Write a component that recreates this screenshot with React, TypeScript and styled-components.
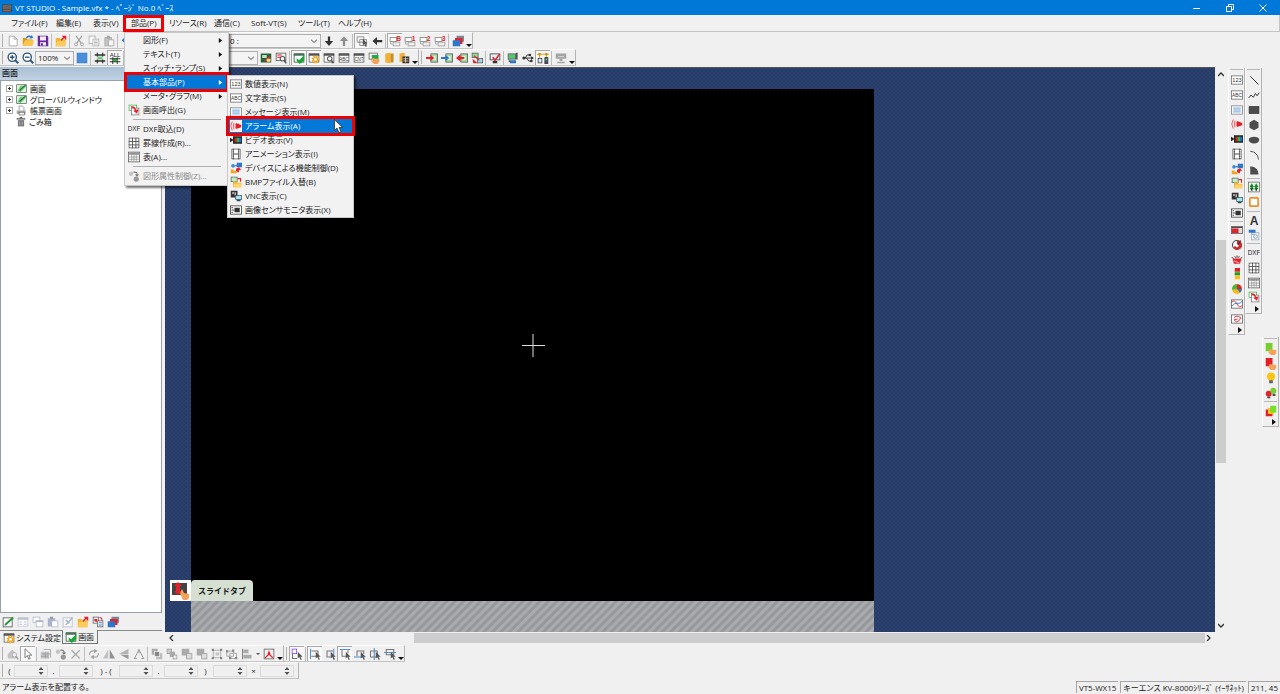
import React from 'react';
import styled, { createGlobalStyle, css } from 'styled-components';

const GlobalStyle = createGlobalStyle`
  * { box-sizing: border-box; }
  body { margin: 0; background: #f0f0f0; }
  body, button, input, select {
    font-family: "Open Sans", "Noto Sans CJK JP", sans-serif;
    font-size: 8px;
    line-height: 12px;
    font-feature-settings: "palt";
    color: #1a1a1a;
  }
`;

/* ---------- icons ---------- */

const D = '#555';
const G = '#a4a4a4';
const RED = '#e2222b';
const BLUE = '#2f75c8';
const GREEN = '#37b34a';

const R = (x: number, y: number, w: number, h: number, fill: string, stroke?: string) => (
  <rect x={x} y={y} width={w} height={h} fill={fill} stroke={stroke} />
);
const L = (d: string, stroke: string, width = 1.4) => (
  <path d={d} fill="none" stroke={stroke} strokeWidth={width} />
);
const F = (d: string, fill: string) => <path d={d} fill={fill} />;
const T = (text: string, size: number, fill: string, y: number, x = 8) => (
  <text x={x} y={y} fontSize={size} fill={fill} textAnchor="middle" fontFamily="Liberation Sans, sans-serif">
    {text}
  </text>
);
const windowFrame = <>{R(1.5, 2.5, 13, 11, '#fff', D)}{R(1, 2, 14, 3, D)}</>;
const pointer = F('M9 5v9l2-2 2 4 1.500-1-2-3.500h3z', D);
const hand = F('M5 9l2-1 3 1 5 0v4l-2 3H8l-4-4 1-1 2 1z', '#f4a259');
const deviceBox = <>{R(6.500, 2.500, 9, 11, '#9fd89f', D)}{R(9, 5, 4, 6, '#d8f0d0')}</>;

const icons: Record<string, React.ReactNode> = {
  newFile: <path d="M3 1.500h6.500l4 4v9H3zM9.500 1.500v4h4" fill="#fff" stroke="#999" />,
  open: <>{F('M1 4h5l1 2h7v8H1z', '#d99a1c')}{F('M4 7h12l-3 7H1z', '#fcc64a')}{L('M6 4q3-4 6-1', BLUE, 2)}{F('M10 5l5-1-2-4z', BLUE)}</>,
  save: <>{R(2, 2, 12, 12, '#fff', '#6a2a9c')}{F('M1 1h13l1 2v12H1zM4 2v5h8V2zM4 10v4h8v-4z', '#6a2a9c')}{R(4, 2, 8, 5, '#f4eef8')}{R(4, 10, 8, 4, '#f4eef8')}{R(5, 11, 3, 3, '#6a2a9c')}</>,
  exportFile: <>{F('M1 4h5l1 2h7v9H1z', '#f5b32e')}{F('M3 8h12l-2 7H1z', '#fccd5e')}{L('M8 7l4-4', RED, 2.200)}{F('M9 1h6v6z', RED)}</>,
  cut: <>{L('M4 1l7 10M12 1L5 11', '#999', 1.600)}<circle cx="4" cy="12.500" r="2" fill="none" stroke="#999" /><circle cx="12" cy="12.500" r="2" fill="none" stroke="#999" /></>,
  copy: <>{R(1.500, 1.500, 8, 10, '#fff', G)}{R(6.500, 5.500, 8, 9, '#fff', G)}{L('M8 8h5M8 10h5M8 12h5', G, 1)}</>,
  paste: <>{R(2.500, 3.500, 9, 11, '#c4c4c4', G)}{R(5, 1, 4, 4, G)}{R(7.500, 6.500, 7, 8, '#f6f6f6', G)}</>,
  undo: F('M1 7l5-5v3q8 0 8 8-2-4-8-4v3z', BLUE),
  down: F('M6.500 2h3v6h4L8 14.500 2.500 8h4z', '#333'),
  up: F('M6.500 14.500h3V8h4L8 2 2.500 8h4z', '#8c8c8c'),
  left: F('M15 6.500v3H8v4L2 8l6-5.500v4z', '#333'),
  select: <>{R(1.500, 2.500, 9, 7, 'none', '#777')}{L('M5 6h9v8H5z', '#777', 1)}{pointer}</>,
  layers: <>{R(6, 1, 10, 8, '#7c8796')}{R(4, 4, 10, 8, RED)}{R(1, 7, 10, 8, BLUE)}</>,
  zoomIn: <><circle cx="7" cy="7" r="5.500" fill="#fff" stroke="#2c5574" strokeWidth="1.800" />{L('M11 11l4 4', '#2c5574', 2.400)}{L('M4 7h6M7 4v6', '#2c5574', 1.800)}</>,
  zoomOut: <><circle cx="7" cy="7" r="5.500" fill="#fff" stroke="#2c5574" strokeWidth="1.800" />{L('M11 11l4 4', '#2c5574', 2.400)}{L('M4 7h6', '#2c5574', 1.800)}</>,
  blueSquare: R(1.500, 1.500, 13, 13, '#4a90d9', '#2f75c8'),
  fit: <>{R(4, 5, 8, 6, '#bfe3c4')}{L('M1 4h14M1 12h14', '#333', 2)}{L('M4.500 1v5M11.500 1v5M4.500 10v5M11.500 10v5', '#333', 1.600)}{L('M5 8h6', GREEN, 1.600)}</>,
  fitAll: <>{T('ALL', 8, '#222', 6)}{R(4, 9, 8, 4, GREEN)}{L('M1 9h14M1 13h14', '#333', 1.600)}{L('M5 7v3M11 7v3M5 12v4M11 12v4', '#333', 1.300)}</>,
  swapScreens: <>{R(1, 2, 14, 12, '#28623b')}{R(3, 4, 6, 4, '#bfe6b8')}{F('M5 12l8-7v7z', RED)}{R(9, 9, 5, 4, '#ffe28a')}</>,
  searchScreen: <>{R(1.500, 1.500, 13, 10, '#eee', D)}{L('M3 4h6M3 7h5', RED)}<circle cx="10" cy="9" r="3" fill="#fff" stroke={D} strokeWidth="1.400" />{L('M12 11l3 4', D, 2)}</>,
  screenCheck: <>{R(1.500, 2.500, 13, 11, '#fff', '#224b2c')}{R(1, 2, 14, 3, '#49715a')}{F('M5 8l3 3 7-7v7l-6 5-4-4z', '#18a53a')}</>,
  screenGear: <>{windowFrame}<circle cx="10" cy="10" r="4" fill="#fff" stroke="#f2a51d" strokeWidth="2.600" strokeDasharray="1.900 1.240" /><circle cx="10" cy="10" r="2.800" fill="#fff" stroke="#f2a51d" strokeWidth="1.800" /></>,
  screenSearch: <>{windowFrame}<circle cx="9" cy="9" r="3" fill="#fff" stroke={D} strokeWidth="1.400" />{L('M11 11l3 4', D, 2)}</>,
  abcWin: <>{windowFrame}{T('ABC', 6, '#333', 12)}</>,
  cntWin: <>{windowFrame}{T('CNT', 6, '#333', 12)}</>,
  screenHand: <>{R(1.500, 1.500, 11, 8, '#fff', D)}{R(5, 4, 9, 6, '#21a848')}{hand}</>,
  book: <>{F('M3 2l7-1v14l-7-1z', '#f2b134')}{R(10, 2, 4, 12, '#c98b1a')}</>,
  bookGrid: <>{F('M2 2l7-1v13l-7-1z', '#f2b134')}{R(6, 6, 9, 9, '#3b2a1a')}{L('M7 9h7M7 12h7M10 7v7', '#eee', 1)}</>,
  sendRed: <>{deviceBox}{L('M0 8h7', RED, 2.600)}{F('M6 4l5 4-5 4z', RED)}</>,
  sendBlue: <>{deviceBox}{L('M0 8h7', BLUE, 2.600)}{F('M6 4l5 4-5 4z', BLUE)}</>,
  receiveRed: <>{deviceBox}{L('M4 8h7', RED, 2.600)}{F('M6 3L0 8l6 5z', RED)}</>,
  compare: <>{R(1.500, 1.500, 8, 6, '#8fd89a', D)}{R(8.500, 8.500, 7, 6, '#9adcf0', D)}{F('M2 9l7 6H3z', RED)}{L('M4 5l7 6', RED, 1.600)}</>,
  monitorCheck: <>{R(1.500, 2.500, 13, 8, '#dfeef5', '#333')}{R(5, 12, 6, 3, '#333')}{L('M5 7l3 4 6-8', RED, 2)}</>,
  simulate: <>{R(1.500, 2.500, 10, 7, '#52c873', D)}{L('M13 1v9', D, 2.400)}{L('M3 10v3h9', D)}{R(4, 11, 8, 4, BLUE)}</>,
  usb: <>{L('M1 8h13M4 8l3-4h3M6 8l3 4h3', '#333', 1.300)}<circle cx="2.500" cy="8" r="2" fill="#333" />{F('M12 5.500l4 2.500-4 2.500z', '#333')}{R(9, 2.500, 3, 3, '#333')}{R(11, 10.500, 3, 3, '#333')}</>,
  network: <>{L('M0 3h16', '#e8b52a', 1.600)}{R(2, 1.500, 3, 3, '#c78d12')}{R(11, 1.500, 3, 3, '#c78d12')}{L('M3.500 4v4M12.500 4v4', '#c78d12', 1)}{R(1.500, 8.500, 5, 6, '#d8f0ff', '#333')}{R(10.500, 7.500, 4, 8, '#456', '#333')}{R(11.500, 9, 2, 2, '#67e07d')}</>,
  device: <>{R(1, 2, 14, 7, G)}{L('M4 6h8', '#ddd', 1)}{R(6, 9, 4, 3, G)}{R(3, 13, 10, 2, G)}</>,
  screenTree: <>{R(1, 2.500, 14, 11.500, '#e5f5e4', '#42604a')}{F('M2 12l4-8 8 0v2l-7 7z', '#7bcb84')}{L('M5 11L14 3', '#2a7d3a', 2)}</>,
  report: <>{L('M4.500 8V1.500h5l2 2V8', '#777', 1)}{F('M1 8h13v5H1z', '#a9a9a9')}{R(4.500, 10.500, 8, 4, '#fff', D)}</>,
  trash: <>{R(3, 5, 10, 10, '#777')}{R(1, 2, 14, 2, '#555')}{R(6, 0, 4, 2, '#555')}{L('M6 7v6M10 7v6', '#ccc', 1)}</>,
  call: <>{R(1.500, 1.500, 10, 7, '#fff', GREEN)}{R(4.500, 5.500, 10, 9, '#fff', '#777')}{L('M4 4q5-1 6 5', RED, 2)}{F('M14 7l-2 6-5-4z', RED)}</>,
  dxf: T('DXF', 8.500, '#222', 11),
  grid: <>{R(1.500, 1.500, 13, 13, '#fff', D)}{L('M6 1v14M10.500 1v14M1 6h14M1 10.500h14', D, 1.200)}</>,
  table: <>{R(.500, 1.500, 15, 13, '#fff', D)}{R(1, 2, 14, 3, '#999')}{L('M5 2v12M8 2v12M11 2v12M1 8h14M1 11h14', '#888', .900)}</>,
  attr: <><circle cx="4" cy="5" r="3" fill="#c5c5c5" /><circle cx="11" cy="12" r="3.500" fill="#999" />{L('M7 3q6-1 5 4', '#777', 1.400)}{F('M9 6h6l-3 3z', '#777')}</>,
  numeric: <>{R(.500, 2.500, 15, 11, '#fff', '#666')}{T('123', 7.500, '#333', 11)}</>,
  text: <>{R(.500, 2.500, 15, 11, '#fff', '#666')}{T('ABC', 6.500, '#333', 10.500)}</>,
  message: <>{R(.800, 2.500, 14.500, 11, '#fff', '#777')}{L('M3 5.500h10M3 8h10M3 10.500h10', '#5b9bdf', 1.200)}</>,
  alarm: <>{F('M8 4v8l7-2.500V6.500z', RED)}{L('M5.500 3.500q-2.500 4.500 0 9M3 2q-4 6 0 12', '#ef5a5f', 1.300)}{L('M7.500 5q-1.500 3 0 6', '#ef5a5f', 1.200)}</>,
  video: <>{R(4, 3, 12, 10, '#222')}{F('M0 5l5 3-5 3z', '#222')}{R(6, 5, 3, 6, '#e02020')}{R(9, 5, 3, 6, '#21c043')}{R(12, 5, 3, 6, '#2766d8')}</>,
  film: <>{R(2.500, 1.500, 11, 13, '#fff', D)}{L('M4.500 1v14M11.500 1v14', D, 1.600)}{L('M5 8h6', D, 1.400)}{L('M4 3v1M4 6v1M4 9v1M4 12v1M12 3v1M12 6v1M12 9v1M12 12v1', '#fff', 1)}</>,
  deviceControl: <>{R(9, 1, 7, 6, BLUE)}<circle cx="4" cy="5" r="2.500" fill="#3d8dd8" />{F('M1 10h4v2h4v3H1z', '#f2a51d')}{F('M8 9l4-2 3 3-3 1v3l-4-2z', RED)}{L('M6 5h4', BLUE, 1.500)}</>,
  bmp: <>{R(1.500, 1.500, 8, 6, '#c7ecc7', '#49715a')}{L('M10 3.500h4v4', RED, 1.500)}{F('M4 7h5l1 2h5v6H4z', '#f0b43a')}{F('M6 10h10l-2 5H4z', '#fcd46c')}</>,
  vnc: <>{R(1, 1, 9, 9, '#333')}{R(3, 3, 2, 2, '#eee')}{R(6, 3, 2, 4, '#bbb')}{R(7.500, 7.500, 8, 5, '#a7e4f5', '#355')}{R(9, 13, 5, 2, '#345')}</>,
  sensor: <>{R(.800, 2.500, 14.500, 11, '#fff', '#333')}{R(6, 5, 7, 6, '#333')}{L('M2 8h4M2 5h2M2 11h2', '#333', 1.200)}</>,
  bar: <>{R(.500, 3.500, 15, 9, '#ddd', '#555')}{R(1, 6, 9, 6, RED)}{L('M1 4.500h14', '#444', 1.500)}</>,
  gauge: <><circle cx="8" cy="8" r="6" fill="#fff" stroke="#444" strokeWidth="1.500" />{F('M8 2a6 6 0 1 1-5 9l5-3z', RED)}{L('M8 9l5-7', '#333', 1.600)}<circle cx="8" cy="9" r="2" fill="#fff" /></>,
  meter: <>{F('M2 6h12l-2 7H4z', RED)}{L('M1 4l2 2M5 3l1 2M8 2v3M11 3l-1 2M15 4l-2 2', '#333', 1.300)}{L('M4 9l7 3', '#fff', 1)}</>,
  levels: <>{R(5, 0, 7, 5, RED)}{R(5, 5, 7, 5, '#40c038')}{R(5, 10, 7, 5, '#f4c21c')}{L('M5 8h7', '#333', 1)}</>,
  pie: <><circle cx="8" cy="8" r="6.500" fill="#f2bb1c" />{F('M8 8L1.500 9A6.500 6.500 0 0 1 8 1.500z', '#46b83b')}{F('M8 8V1.500A6.500 6.500 0 0 1 14.500 8z', RED)}{F('M8 8h6.500A6.500 6.500 0 0 1 12 13z', BLUE)}</>,
  trend: <>{R(.800, 2.500, 14.500, 11, '#fff', '#555')}{L('M1 5q4-3 7 3t7 2', RED, 1.200)}{L('M1 11q4-5 8-4t6-3', BLUE, 1.200)}</>,
  xy: <>{R(.800, 2.500, 14.500, 11, '#fff', '#555')}{L('M4 6l4-2 5 2-2 4-4 2-3-3 5-1', RED, 1.200)}</>,
  line: L('M3 3l11 11', '#333', 1.300),
  polyline: L('M1 12l3-4 3 3 3-5 2 3 3-4', '#333', 1.300),
  rect: R(1.500, 3.500, 13, 9, '#4c4c4c', '#333'),
  hexagon: F('M8 1l6 3.500v7L8 15l-6-3.500v-7z', '#4c4c4c'),
  ellipse: <ellipse cx="8" cy="8" rx="7" ry="4.500" fill="#4c4c4c" />,
  arc: L('M3 3q10 1 11 11', '#444', 1.200),
  sector: F('M3 3q11 1 11 11H3z', '#4c4c4c'),
  image: <>{R(.800, 1.500, 14.500, 13, '#eefaee', '#666')}{F('M5 3l3 5H2zM5 6l3 5H2zM11 3l3 5H8zM11 6l3 5H8z', '#198a2e')}{R(4, 10, 2, 3, '#333')}{R(10, 10, 2, 3, '#333')}</>,
  frame: <rect x="2.500" y="2.500" width="11" height="11" rx="1" fill="#fff" stroke="#e8902a" strokeWidth="2.200" />,
  letter: <text x="8" y="14" fontSize="16" fontWeight="bold" fill="#333" textAnchor="middle" fontFamily="Liberation Sans, sans-serif">A</text>,
  linkScreen: <>{R(4.500, 4.500, 10, 10, '#eef3f8', '#9ab')}{R(1, 1, 9, 4, BLUE)}<circle cx="10" cy="10" r="2.500" fill="none" stroke="#89a" />{L('M5 7h4', '#89a', 1.200)}</>,
  touchGreen: <>{R(1, 0, 9, 11, '#76d02c')}{hand}</>,
  touchRed: <>{R(1, 0, 9, 11, '#e21f26')}{hand}</>,
  bulb: <><circle cx="8" cy="6" r="5.500" fill="#fbc412" />{R(5.500, 11, 5, 4, '#666')}</>,
  lamps: <><circle cx="5" cy="9" r="4" fill={RED} /><circle cx="11" cy="5" r="4" fill="#76d02c" />{R(3, 13, 4, 2, '#444')}{R(10, 9, 4, 3, '#555')}</>,
  palette: <>{R(1, 6, 9, 9, '#e21f26')}{R(4, 4, 8, 8, '#fbc412')}{R(7, 1, 8, 9, '#76e02c')}</>,
  editScreen: <>{R(1.500, 2.500, 12, 12, '#fff', '#444')}{L('M4 12L15 2', '#209038', 2.400)}</>,
  gWindow: <>{R(1.500, 2.500, 13, 11, '#fff', '#b9c2d2')}{R(1, 2, 14, 3, '#b9c2d2')}{L('M3 8h4M9 8h4M3 11h4M9 11h4', '#b9c2d2', 1.200)}</>,
  gCopy: <>{R(1.500, 1.500, 9, 7, '#fff', '#a9b3c9')}{R(5.500, 6.500, 9, 8, '#fff', '#a9b3c9')}{R(5, 6, 10, 2, '#a9b3c9')}</>,
  gPaste: <>{R(1, 3, 10, 11, '#a9b3c9')}{R(4, 1, 4, 3, '#8f9ab3')}{R(6.500, 6.500, 8, 8, '#fff', '#a9b3c9')}</>,
  gEdit: <>{R(1.500, 2.500, 12, 12, '#fff', '#a9b3c9')}{L('M5 12l9-10M5 5l5 5', '#a9b3c9', 2)}</>,
  convert: <>{R(1.500, 1.500, 7, 8, '#fff', D)}{R(7.500, 6.500, 7, 8, '#fff', D)}{L('M9 9h4M9 12h4', BLUE)}{F('M3 4h4v4l-4-1z', RED)}{L('M10 2q4 0 3 4', RED)}</>,
  gHouse: <>{F('M1 8l6-6 6 6v6H1z', '#c3c3c3')}<circle cx="10" cy="9" r="3" fill="#f0f0f0" stroke={G} />{L('M12 11l3 4', G, 1.800)}</>,
  arrowCursor: <path d="M4 1v12l3-3 2 5 2-1-2-4.500h4z" fill="#fff" stroke="#555" />,
  gTouch: <>{R(1, 5, 10, 9, '#c4c4c4')}{L('M5 2h9v11M3 8h11M7 5v9M11 5v9M1 11h10', '#999', 1)}</>,
  gDelete: L('M2 3l11 11M13 3L2 14', '#aaa', 1.600),
  gRotate: <>{L('M2 9q0-6 7-5M14 7q0 6-7 5', G, 1.600)}{F('M8 1l5 3-5 3zM8 9l-5 3 5 3z', G)}</>,
  gFlipH: <>{F('M7 2v12H0z', '#c0c0c0')}{F('M9 2v12h7z', '#909090')}</>,
  gFlipV: <>{F('M14 1v7H1z', '#b5b5b5')}{F('M14 15V9H3z', '#999')}</>,
  gTriangle: L('M8 2L2 14M8 2l6 12M8 2v5M1 14h4M11 14h4', '#999', 1.300),
  gFront: <>{R(1, 1, 8, 8, '#aaa')}{R(7, 7, 8, 8, '#bbb')}{R(4.500, 4.500, 7, 7, '#888', '#eee')}</>,
  gFront2: <>{R(1.500, 1.500, 6, 6, '#ccc', '#999')}{R(5, 5, 7, 7, '#aaa')}{R(9.500, 9.500, 5, 5, '#eee', '#999')}</>,
  gBack: <>{R(1, 1, 10, 9, '#aaa')}{R(7.500, 7.500, 7, 7, '#ddd', '#999')}</>,
  gGroup: <>{L('M3 3h10v10H3z', '#999', 1)}{R(1, 1, 3, 3, '#888')}{R(12, 1, 3, 3, '#888')}{R(1, 12, 3, 3, '#888')}{R(12, 12, 3, 3, '#888')}{R(6, 6, 5, 4, '#c4c4c4')}</>,
  gUngroup: <>{L('M1 4h9v7H1zM5 7h9v7H5z', '#999', 1)}{R(0, 3, 3, 3, '#888')}{R(8, 2, 3, 3, '#888')}{R(12, 12, 3, 3, '#888')}{R(4, 12, 3, 3, '#888')}</>,
  gAlign: <>{L('M2 1v14', '#777', 1.200)}{R(3, 2, 7, 5, '#aaa')}{R(3, 9, 11, 5, '#aaa')}</>,
  anchor: <>{R(1.500, 1.500, 13, 13, '#eee', '#555')}{F('M8 3l2 5-2 2-2-2z', RED)}{L('M8 8l-5 5M8 8l5 5', RED, 1.600)}</>,
  snapPurple: <>{R(1.500, 1.500, 6, 6, '#fff', '#7a3cf0')}{L('M2 8v6h6', '#777')}{pointer}</>,
  snapLeft: <>{L('M2 1v14', '#4d93dd')}{L('M3 4h9v7H3', '#777')}{pointer}</>,
  snapRight: <>{L('M13 1v14', '#4d93dd')}{L('M12 4H4v8h5', '#777')}{pointer}</>,
  snapTop: <>{L('M1 2h14', '#4d93dd')}{L('M4 3v8h6M12 3v4', '#777')}{pointer}</>,
  snapBottom: <>{L('M0 12h15', '#4d93dd')}{L('M4 11V4h9v4', '#777')}{pointer}</>,
  snapCenter: <>{L('M7 0v16', '#4d93dd')}{L('M2 4h9v8H2z', '#777')}{pointer}</>,
  snapMiddle: <>{L('M0 6h16', '#4d93dd')}{L('M3 2h10v7H3z', '#777')}{pointer}</>,
};
['B', '1', '2', '3'].forEach((mark) => {
  icons['screen' + mark] = (
    <>
      {R(1.5, 3.5, 9, 5, '#fff', '#777')}
      {R(5.5, 9.5, 9, 5, '#eee', '#999')}
      {L('M2 9v3h3', '#999', 1)}
      <text x="13" y="7.5" fontSize="9" fontWeight="bold" fill={RED} textAnchor="middle" fontFamily="Liberation Sans, sans-serif">{mark}</text>
    </>
  );
});

const Svg = styled.svg<{ $size: number }>`
  display: block;
  flex: none;
  width: ${(p) => p.$size}px;
  height: ${(p) => p.$size}px;
`;
const Icon = ({ name, size = 12 }: { name: string; size?: number }) => (
  <Svg $size={size} viewBox="0 0 16 16" aria-hidden="true">{icons[name]}</Svg>
);

/* ---------- shared parts ---------- */

const bare = css`
  border: 0;
  padding: 0;
  background: none;
`;

const Shell = styled.div`
  display: flex;
  flex-direction: column;
  min-height: 100vh;
  overflow: hidden;
`;

const TitleBar = styled.header`
  display: flex;
  align-items: center;
  height: 15px;
  padding: 0 2px;
  gap: 3px;
  background: #0078d7;
  color: #fff;
`;
const Title = styled.h1`
  flex: 1;
  margin: 0;
  font-size: 8px;
  font-weight: 400;
  line-height: 12px;
`;
const CaptionButton = styled.button`
  ${bare}
  display: grid;
  place-items: center;
  width: 30px;
  height: 15px;
`;

const MenuBar = styled.nav`
  display: flex;
  height: 17px;
  padding-left: 6px;
  border: 1px solid #c4c4c4;
  border-top: 0;
  border-left: 0;
  background: #f1f1f1;
`;
const MenuSlot = styled.div<{ $width: number; $marked?: boolean }>`
  position: relative;
  width: ${(p) => p.$width}px;
  ${(p) => p.$marked && css`
    &::after {
      content: '';
      position: absolute;
      inset: 0 0 -1px -3px;
      border: 3px solid #f00000;
      pointer-events: none;
    }
  `}
`;
const MenuButton = styled.button`
  ${bare}
  height: 16px;
  padding-left: 5px;
  white-space: nowrap;
`;

const menuPanel = css`
  position: absolute;
  z-index: 5;
  margin: 0;
  list-style: none;
  background: #f2f2f2;
  border: 1px solid #c8c8c8;
  box-shadow: 2px 2px 2px rgba(0, 0, 0, 0.55);
`;
const DropMenu = styled.ul`
  ${menuPanel}
  top: 17px;
  left: -2px;
  width: 105px;
  padding: 0 2px 2px 2px;
`;
const SubMenu = styled.ul`
  ${menuPanel}
  z-index: 6;
  top: 60px;
  left: 101px;
  width: 127px;
  padding: 1px 1px 0;
`;
const MenuLine = styled.li`
  position: relative;
`;
const MenuRow = styled.button<{ $active?: boolean; $off?: boolean }>`
  ${bare}
  position: relative;
  display: flex;
  align-items: center;
  gap: 3px;
  width: 100%;
  height: 14px;
  padding: 0 3px 0 1px;
  text-align: left;
  white-space: nowrap;
  color: ${(p) => (p.$off ? '#8a8a8a' : '#1a1a1a')};
  ${(p) => p.$active && css`
    z-index: 1;
    background: #0078d7;
    color: #fff;
    outline: 3px solid #f00000;
  `}
`;
const IconSlot = styled.span<{ $plain?: boolean }>`
  flex: none;
  width: 12px;
  height: 12px;
  background: ${(p) => (p.$plain ? '#f2f2f2' : 'none')};
`;
const RowText = styled.span`
  flex: 1;
`;
const MenuRule = styled.li`
  height: 5px;
  margin: 0 5px 0 6px;
  background: linear-gradient(#b0b0b0, #b0b0b0) 0 2px / 100% 1px no-repeat;
`;
const Cursor = styled.svg`
  position: absolute;
  right: 9px;
  top: 0;
  width: 10px;
  height: 14px;
`;

const BarRow = styled.div<{ $tall?: boolean }>`
  display: flex;
  height: ${(p) => (p.$tall ? 18 : 17)}px;
`;
const Bar = styled.div`
  display: flex;
  align-items: center;
  height: 17px;
  border-right: 1px solid #b4b4b4;
  border-bottom: 1px solid #c4c4c4;
  border-top: 1px solid #fafafa;
`;
const Grip = styled.span`
  width: 1px;
  height: 13px;
  margin: 0 2px 0 2px;
  background: #b0b0b0;
`;
const Sep = styled.span`
  width: 1px;
  height: 14px;
  margin: 0 1px;
  background: #bdbdbd;
`;
const Tool = styled.button<{ $pressed?: boolean }>`
  ${bare}
  display: grid;
  place-items: center;
  width: 15px;
  height: 15px;
  ${(p) => p.$pressed && css`
    background: #f8f8f8;
    box-shadow: inset 1px 1px 0 #a8a8a8;
  `}
`;
const MoreButton = styled.button<{ $middle?: boolean }>`
  ${bare}
  display: flex;
  align-items: ${(p) => (p.$middle ? 'center' : 'flex-end')};
  justify-content: center;
  width: 7px;
  height: 13px;
`;
const Triangle = styled.span`
  border: 3px solid transparent;
  border-top-color: #111;
  border-bottom: 0;
`;
const SmallTriangle = styled.span`
  border: 2px solid transparent;
  border-top-color: #555;
  border-bottom: 0;
`;
const Combo = styled.span<{ $width: number }>`
  display: flex;
  align-items: center;
  width: ${(p) => p.$width}px;
  height: 14px;
  padding-right: 3px;
  background: #f4f4f4;
  border: 1px solid #b0b0b0;
`;
const ComboSelect = styled.select`
  ${bare}
  appearance: none;
  flex: 1;
  min-width: 0;
  padding-left: 2px;
  outline: 0;
`;

const Chevron = () => (
  <Svg $size={6} viewBox="0 0 6 6" aria-hidden="true">{L('M0 1.500l3 3 3-3', '#444', 1)}</Svg>
);

/* A bar is a list of icon names; "|" is a divider, "*" marks a pressed tool,
   ">" is the overflow arrow and "v" a small drop-down arrow. */
const tools = (list: string) =>
  list.split(' ').map((token, i) => {
    if (token === '|') return <Sep key={i} />;
    if (token === '>') return <MoreButton key={i} aria-label="その他"><Triangle /></MoreButton>;
    if (token === 'v') return <MoreButton key={i} $middle aria-label="配置"><SmallTriangle /></MoreButton>;
    const pressed = token.startsWith('*');
    const name = pressed ? token.slice(1) : token;
    return (
      <Tool key={i} $pressed={pressed} aria-label={name}>
        <Icon name={name} />
      </Tool>
    );
  });

/* ---------- left panel ---------- */

const Main = styled.main`
  display: flex;
  flex: 1;
`;
const Side = styled.aside`
  display: flex;
  flex-direction: column;
  width: 162px;
  margin-right: 3px;
`;
const SideTitle = styled.h2`
  margin: 0;
  height: 13px;
  padding-left: 2px;
  font-size: 8px;
  font-weight: 500;
  line-height: 12px;
  background: linear-gradient(#a9bfd3, #c0d2e4);
`;
const Tree = styled.ul`
  flex: 1;
  margin: 0;
  padding: 2px 0 0 5px;
  list-style: none;
  background: #fff;
  border: 1px solid #98a0aa;
`;
const TreeRow = styled.li`
  display: flex;
  align-items: center;
  gap: 3px;
  height: 11px;
  color: #111;
`;
const Expander = styled.button`
  ${bare}
  display: grid;
  place-items: center;
  width: 7px;
  height: 7px;
`;
const ExpanderSpace = styled.span`
  width: 7px;
`;
const TreeText = styled.span<{ $selected?: boolean }>`
  background: ${(p) => (p.$selected ? '#efefef' : 'none')};
`;
const SideTools = styled.div`
  display: flex;
  align-items: center;
  height: 17px;
`;
const Tabs = styled.div`
  display: flex;
  height: 15px;
  border-top: 1px solid #8a8a8a;
`;
const Tab = styled.button<{ $active?: boolean }>`
  ${bare}
  display: flex;
  align-items: center;
  gap: 1px;
  height: 13px;
  padding: 0 1px 0 3px;
  white-space: nowrap;
  border-right: 1px solid #777;
  border-bottom: ${(p) => (p.$active ? '1px solid #777' : '0')};
  ${(p) => p.$active && css`
    margin-top: -1px;
    height: 14px;
    padding-right: 3px;
    padding-left: 2px;
    background: #f0f0f0;
  `}
`;

/* ---------- workspace ---------- */

const Work = styled.section`
  display: grid;
  flex: 1;
  min-width: 0;
  grid-template-columns: 1fr 12px;
  grid-template-rows: 1fr 12px;
  margin-bottom: 1px;
`;
const Stage = styled.div`
  position: relative;
  display: flex;
  min-width: 0;
  padding: 21px 0 0 26px;
  overflow: hidden;
  border-top: 1px solid #555;
  background: repeating-conic-gradient(#253a67 0 25%, #2d426e 0 50%) 0 0 / 4px 4px;
`;
const Screen = styled.div`
  display: flex;
  flex: none;
  flex-direction: column;
  width: 683px;
`;
const Panel = styled.div`
  display: grid;
  place-items: center;
  flex: none;
  height: 512px;
  background: #000;
`;
const Hatched = styled.div`
  flex: 1;
  background: repeating-linear-gradient(135deg, #96989c 0 2px, #a9abaf 3px 5px, #96989c 6px);
`;
const SlideTab = styled.div`
  position: absolute;
  top: 512px;
  left: 5px;
  display: flex;
  align-items: center;
  height: 21px;
`;
const SlideIcon = styled.span`
  display: grid;
  place-items: center;
  width: 21px;
  height: 21px;
  background: #fff;
`;
const SlideLabel = styled.span`
  display: grid;
  place-items: center;
  width: 62px;
  height: 21px;
  border-radius: 4px 4px 0 0;
  background: #d5dfd2;
  font-weight: 700;
  font-feature-settings: normal;
`;
const Scroll = styled.div<{ $vertical?: boolean }>`
  display: flex;
  align-items: center;
  justify-content: space-between;
  flex-direction: ${(p) => (p.$vertical ? 'column' : 'row')};
  padding: ${(p) => (p.$vertical ? '4px 0 3px' : '0 3px 0 3px')};
  background: #f0f0f0;
`;
const ScrollButton = styled.button`
  ${bare}
  display: grid;
  place-items: center;
  width: 6px;
  height: 6px;
`;
const Track = styled.div<{ $vertical?: boolean }>`
  display: flex;
  flex: 1;
  flex-direction: ${(p) => (p.$vertical ? 'column' : 'row')};
  align-self: stretch;
  align-items: stretch;
`;
const Span = styled.div<{ $grow: number; $thumb?: boolean }>`
  flex: ${(p) => p.$grow} 0 0;
  margin: 1px;
  background: ${(p) => (p.$thumb ? '#cdcdcd' : 'none')};
`;

/* ---------- right palettes ---------- */

const Palettes = styled.aside`
  display: flex;
  align-items: flex-start;
  width: 53px;
  padding: 1px 0 0 1px;
`;
const Palette = styled.div<{ $height: number; $drop?: number }>`
  display: flex;
  flex-direction: column;
  align-items: center;
  width: 17px;
  height: ${(p) => p.$height}px;
  margin-top: ${(p) => p.$drop || 0}px;
  border-right: 1px solid #b4b4b4;
  border-bottom: 1px solid #b4b4b4;
  border-left: 1px solid #fcfcfc;
`;
const PaletteRule = styled.span`
  width: 13px;
  height: 1px;
  margin: 1px 0;
  background: #b8b8b8;
`;
const PaletteTools = styled.div`
  display: flex;
  flex: 1;
  flex-direction: column;
  align-items: center;
  min-height: 0;
  padding-top: 2px;
`;
const PaletteTool = styled.button`
  ${bare}
  display: grid;
  place-items: center;
  flex: 1;
  min-height: 0;
  width: 15px;
`;
const PaletteMore = styled.button`
  ${bare}
  width: 6px;
  height: 8px;
  margin-left: 6px;
`;
const paletteItems = (list: string) => (
  <>
    <PaletteRule />
    <PaletteTools>
      {list.split(' ').map((name, i) =>
        name === '|' ? <PaletteRule key={i} /> : (
          <PaletteTool key={i} aria-label={name}><Icon name={name} /></PaletteTool>
        ),
      )}
    </PaletteTools>
    <PaletteMore aria-label="その他">
      <Svg $size={6} viewBox="0 0 6 6">{F('M1 0l4 3-4 3z', '#111')}</Svg>
    </PaletteMore>
  </>
);

/* ---------- bottom ---------- */

const Mark = styled.span<{ $width: number }>`
  width: ${(p) => p.$width}px;
  text-align: center;
`;
const Spin = styled.span`
  display: flex;
  align-items: center;
  width: 34px;
  height: 12px;
  padding-right: 2px;
  border: 1px solid #dadada;
`;
const SpinInput = styled.input`
  ${bare}
  flex: 1;
  min-width: 0;
  height: 10px;
`;
const SpinArrows = () => (
  <Svg $size={8} viewBox="0 0 8 8" aria-hidden="true">{F('M4 0l2.500 3h-5zM4 8l2.500-3h-5z', '#555')}</Svg>
);
const Status = styled.footer`
  display: flex;
  align-items: center;
  gap: 2px;
  height: 14px;
  padding-left: 2px;
`;
const StatusText = styled.span`
  flex: 1;
`;
const StatusCell = styled.span`
  height: 12px;
  padding: 0 2px;
  line-height: 11px;
  white-space: nowrap;
  border-top: 1px solid #a6a6a6;
  border-left: 1px solid #a6a6a6;
`;

type Entry = { label: string; icon?: string; arrow?: boolean; active?: boolean; off?: boolean };

const partsMenu: (Entry | null)[] = [
  { label: '図形(F)', arrow: true },
  { label: 'テキスト(T)', arrow: true },
  { label: 'スイッチ・ランプ(S)', arrow: true },
  { label: '基本部品(P)', arrow: true, active: true },
  { label: 'メータ・グラフ(M)', arrow: true },
  { label: '画面呼出(G)', icon: 'call' },
  null,
  { label: 'DXF取込(D)', icon: 'dxf' },
  { label: '罫線作成(R)...', icon: 'grid' },
  { label: '表(A)...', icon: 'table' },
  null,
  { label: '図形属性制御(Z)...', icon: 'attr', off: true },
];
const basicMenu: Entry[] = [
  { label: '数値表示(N)', icon: 'numeric' },
  { label: '文字表示(S)', icon: 'text' },
  { label: 'メッセージ表示(M)', icon: 'message' },
  { label: 'アラーム表示(A)', icon: 'alarm', active: true },
  { label: 'ビデオ表示(V)', icon: 'video' },
  { label: 'アニメーション表示(I)', icon: 'film' },
  { label: 'デバイスによる機能制御(D)', icon: 'deviceControl' },
  { label: 'BMPファイル入替(B)', icon: 'bmp' },
  { label: 'VNC表示(C)', icon: 'vnc' },
  { label: '画像センサモニタ表示(X)', icon: 'sensor' },
];
const menus: [string, number][] = [
  ['ファイル(F)', 45], ['編集(E)', 37], ['表示(V)', 38], ['部品(P)', 38], ['リソース(R)', 45],
  ['通信(C)', 37], ['Soft-VT(S)', 47], ['ツール(T)', 40], ['ヘルプ(H)', 40],
];
const treeItems: [string, string][] = [
  ['画面', 'screenTree'], ['グローバルウィンドウ', 'screenTree'], ['帳票画面', 'report'], ['ごみ箱', 'trash'],
];
const coordinates: [string, string, number][] = [
  ['(', 'X1', 9], ['.', 'Y1', 11], [') - (', 'X2', 26], ['.', 'Y2', 11], [')', '幅', 15], ['×', '高さ', 13],
];

const MenuItem = ({ entry }: { entry: Entry }) => (
  <MenuLine>
    <MenuRow $active={entry.active} $off={entry.off} disabled={entry.off}>
      <IconSlot $plain={entry.active && !!entry.icon}>{entry.icon && <Icon name={entry.icon} />}</IconSlot>
      <RowText>{entry.label}</RowText>
      {entry.arrow && (
        <Svg $size={5} viewBox="0 0 6 6" aria-hidden="true">{F('M1 0l4 3-4 3z', entry.active ? '#fff' : '#111')}</Svg>
      )}
      {entry.active && !entry.arrow && (
        <Cursor viewBox="0 0 10 14" aria-hidden="true">
          <path d="M1.500 .500v11l2.500-2.500 2 4.500 2-1-2-4h3.500z" fill="#fff" stroke="#222" strokeWidth=".700" />
        </Cursor>
      )}
    </MenuRow>
  </MenuLine>
);

const App = () => (
  <Shell>
    <GlobalStyle />
    <TitleBar>
      <Svg $size={10} viewBox="0 0 16 16" aria-hidden="true">{R(0, 2, 16, 12, '#444')}{R(1, 3, 14, 7, '#666')}{R(2, 11, 12, 2, '#c05a30')}</Svg>
      <Title>VT STUDIO - Sample.vfx * - ﾍﾟｰｼﾞ No.0 ﾍﾞｰｽ</Title>
      <CaptionButton aria-label="最小化"><Svg $size={8} viewBox="0 0 8 8">{L('M0 4.500h7', '#fff', 1)}</Svg></CaptionButton>
      <CaptionButton aria-label="元に戻す"><Svg $size={8} viewBox="0 0 8 8">{L('M.500 2.500h5v5h-5zM2.500 2V.500h5v5H6', '#fff', 1)}</Svg></CaptionButton>
      <CaptionButton aria-label="閉じる"><Svg $size={8} viewBox="0 0 8 8">{L('M.500 .500l7 7M7.500 .500l-7 7', '#fff', 1)}</Svg></CaptionButton>
    </TitleBar>

    <MenuBar>
      {menus.map(([label, width]) => {
        const open = label === '部品(P)';
        return (
          <MenuSlot key={label} $width={width} $marked={open}>
            <MenuButton aria-expanded={open}>{label}</MenuButton>
            {open && (
              <DropMenu>
                {partsMenu.map((e, i) => (e ? <MenuItem key={i} entry={e} /> : <MenuRule key={i} />))}
              </DropMenu>
            )}
            {open && (
              <SubMenu>
                {basicMenu.map((e) => <MenuItem key={e.label} entry={e} />)}
              </SubMenu>
            )}
          </MenuSlot>
        );
      })}
    </MenuBar>

    <BarRow>
      <Bar>
        <Grip />
        {tools('newFile open save | exportFile | cut copy paste | undo undo | copy copy copy copy copy')}
        <Combo $width={94}>
          <ComboSelect aria-label="画面番号"><option>0 :</option></ComboSelect>
          <Chevron />
        </Combo>
        {tools('down up | *select left | *screenB screen1 screen2 screen3 | layers >')}
      </Bar>
    </BarRow>
    <BarRow $tall>
      <Bar>
        <Grip />
        {tools('zoomIn zoomOut')}
        <Combo $width={39}>
          <ComboSelect aria-label="倍率"><option>100%</option></ComboSelect>
          <Chevron />
        </Combo>
        {tools('blueSquare | fit *fitAll |')}
        <Combo $width={133}>
          <ComboSelect aria-label="言語"><option></option></ComboSelect>
          <Chevron />
        </Combo>
        {tools('swapScreens searchScreen | *screenCheck *screenGear screenSearch abcWin cntWin screenHand book bookGrid >')}
      </Bar>
      <Bar>
        <Grip />
        {tools('sendRed sendBlue receiveRed compare | monitorCheck | simulate usb *network | device >')}
      </Bar>
    </BarRow>

    <Main>
      <Side>
        <SideTitle>画面</SideTitle>
        <Tree>
          {treeItems.map(([label, icon], i) => (
            <TreeRow key={label}>
              {i < 3 ? (
                <Expander aria-label={label}>
                  <Svg $size={7} viewBox="0 0 7 7">{R(0.5, 0.5, 6, 6, '#fff', '#aaa')}{L('M2 3.500h3M3.500 2v3', '#333', 1)}</Svg>
                </Expander>
              ) : <ExpanderSpace />}
              <Icon name={icon} size={i === 3 ? 10 : 11} />
              <TreeText $selected={i === 0}>{label}</TreeText>
            </TreeRow>
          ))}
        </Tree>
        <SideTools>{tools('editScreen gWindow gCopy gPaste gEdit exportFile convert layers')}</SideTools>
        <Tabs>
          <Tab><Icon name="screenGear" />システム設定</Tab>
          <Tab $active><Icon name="screenCheck" />画面</Tab>
        </Tabs>
      </Side>

      <Work>
        <Stage>
          <Screen>
            <Panel>
              <Svg $size={24} viewBox="0 0 24 24" aria-hidden="true">{L('M12 1v23M1 12.500h23', '#ddd', 1)}</Svg>
            </Panel>
            <Hatched />
          </Screen>
          <SlideTab>
            <SlideIcon>
              <Svg $size={19} viewBox="0 0 19 19" aria-hidden="true">
                {R(1, 2, 15, 12, '#444')}
                {F('M7 1l4 4H9v5h2l-4 4-4-4h2V5H3z', RED)}
                {F('M9 12l2-4 2 4 5 1v4l-2 2h-4z', '#f4a259')}
              </Svg>
            </SlideIcon>
            <SlideLabel>スライドタブ</SlideLabel>
          </SlideTab>
        </Stage>
        <Scroll $vertical>
          <ScrollButton aria-label="上へ"><Svg $size={6} viewBox="0 0 6 6">{L('M0 5l3-3 3 3', '#333', 1.300)}</Svg></ScrollButton>
          <Track $vertical><Span $grow={160} /><Span $grow={224} $thumb /><Span $grow={157} /></Track>
          <ScrollButton aria-label="下へ"><Svg $size={6} viewBox="0 0 6 6">{L('M0 1l3 3 3-3', '#333', 1.300)}</Svg></ScrollButton>
        </Scroll>
        <Scroll>
          <ScrollButton aria-label="左へ"><Svg $size={6} viewBox="0 0 6 6">{L('M5 0L2 3l3 3', '#333', 1.300)}</Svg></ScrollButton>
          <Track><Span $grow={237} /><Span $grow={791} $thumb /></Track>
          <ScrollButton aria-label="右へ"><Svg $size={6} viewBox="0 0 6 6">{L('M1 0l3 3-3 3', '#333', 1.300)}</Svg></ScrollButton>
        </Scroll>
      </Work>

      <Palettes>
        <Palette $height={267}>
          {paletteItems('numeric text message alarm video film deviceControl bmp vnc sensor | bar gauge meter levels pie trend xy')}
        </Palette>
        <Palette $height={246}>
          {paletteItems('line polyline rect hexagon ellipse arc sector | image frame | letter linkScreen | dxf grid table call')}
        </Palette>
        <Palette $height={90} $drop={269}>
          {paletteItems('touchGreen touchRed bulb lamps | palette')}
        </Palette>
      </Palettes>
    </Main>

    <BarRow>
      <Bar>
        <Grip />
        {tools('gHouse *arrowCursor | gTouch attr gDelete | gRotate gFlipH gFlipV gTriangle | gFront gFront2 gBack gBack gGroup gUngroup gAlign v anchor >')}
      </Bar>
      <Bar>
        <Grip />
        {tools('*snapPurple | *snapLeft snapRight *snapTop snapBottom snapCenter snapMiddle >')}
      </Bar>
    </BarRow>
    <BarRow $tall>
      <Bar>
        <Grip />
        {coordinates.map(([mark, name, width], i) => (
          <React.Fragment key={i}>
            <Mark $width={width}>{mark}</Mark>
            <Spin><SpinInput aria-label={name} /><SpinArrows /></Spin>
          </React.Fragment>
        ))}
        <Mark $width={4} />
      </Bar>
    </BarRow>

    <Status>
      <StatusText>アラーム表示を配置する。</StatusText>
      <StatusCell>VT5-WX15</StatusCell>
      <StatusCell>キーエンス KV-8000ｼﾘｰｽﾞ (ｲｰｻﾈｯﾄ)</StatusCell>
      <StatusCell>211, 45</StatusCell>
    </Status>
  </Shell>
);

export default App;
